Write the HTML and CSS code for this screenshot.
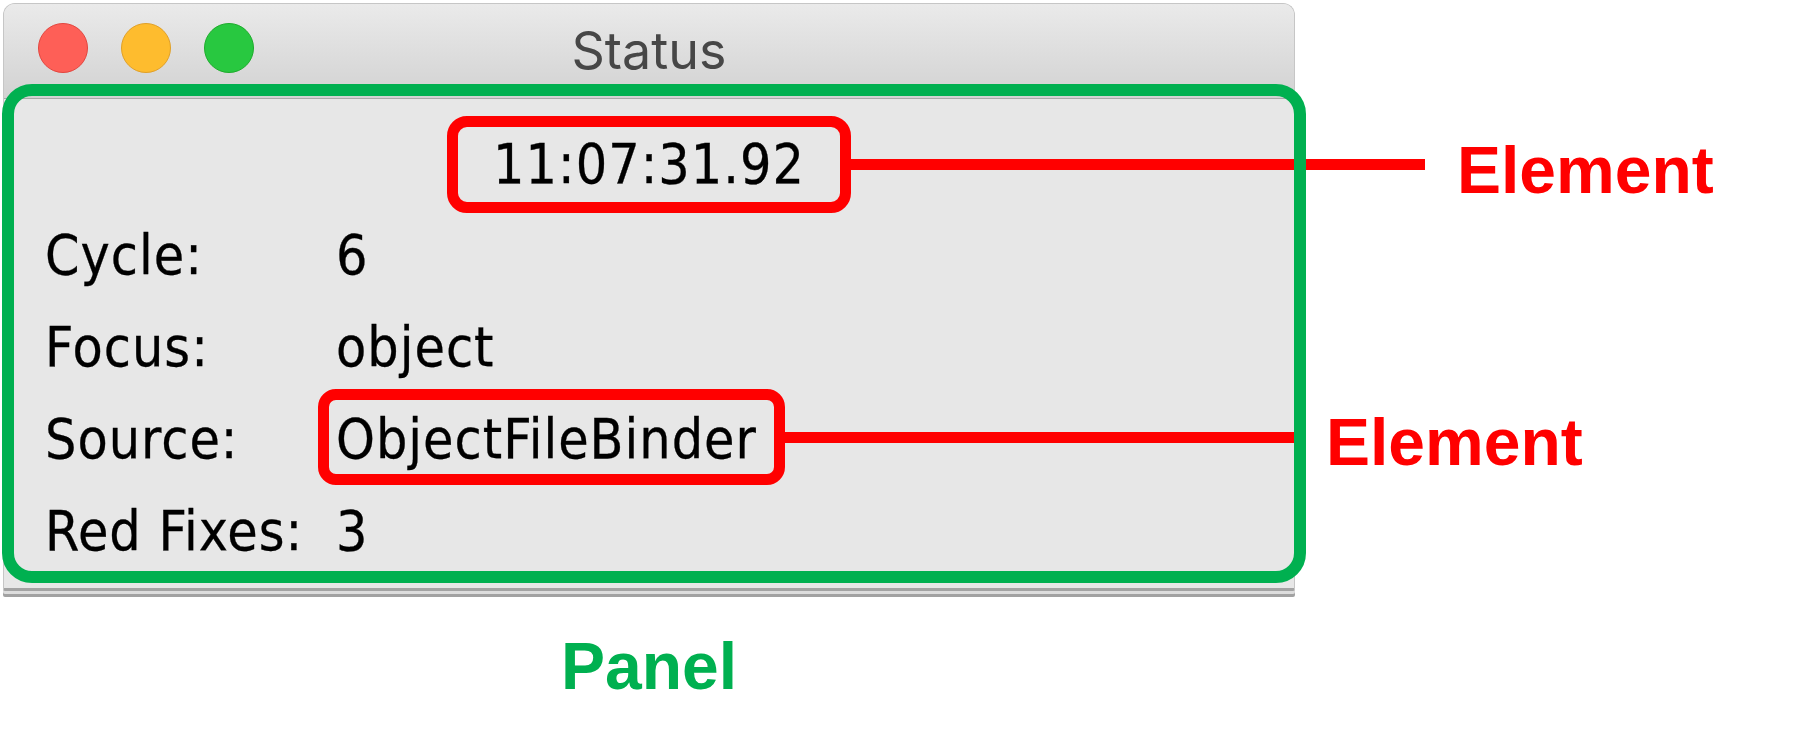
FILE: index.html
```html
<!DOCTYPE html>
<html lang="en">
<head>
<meta charset="utf-8">
<title>Status panel</title>
<link rel="stylesheet" href="styles.css">
</head>
<body>
<div class="stage">
  <div class="window">
    <div class="titlebar">
      <div class="lights">
        <span class="light light-close"></span>
        <span class="light light-min"></span>
        <span class="light light-max"></span>
      </div>
      <div class="title">Status</div>
      <div></div>
    </div>
    <div class="content">
      <div class="clock-row">
        <span class="clock mark">11:07:31.92
          <span class="callout callout-clock"><span class="callout-line"></span><span class="callout-tag">Element</span></span>
        </span>
      </div>
      <div class="fields">
        <div class="label">Cycle:</div><div class="value">6</div>
        <div class="label">Focus:</div><div class="value">object</div>
        <div class="label">Source:</div>
        <div class="value"><span class="source mark">ObjectFileBinder
          <span class="callout callout-source"><span class="callout-line"></span><span class="callout-tag">Element</span></span>
        </span></div>
        <div class="label">Red Fixes:</div><div class="value">3</div>
      </div>
    </div>
  </div>
  <div class="panel-outline"></div>
  <div class="caption">Panel</div>
</div>
</body>
</html>
```

FILE: styles.css
```css
html, body {
  margin: 0;
  padding: 0;
  background: #ffffff;
}

.stage {
  position: relative;
  width: 1799px;
  height: 743px;
  overflow: hidden;
}

.window {
  margin: 3px 0 0 3px;
  width: 1292px;
  box-sizing: border-box;
  border: 1px solid #c6c6c6;
  border-bottom: 3px solid #a3a3a3;
  border-radius: 12px 12px 2px 2px;
  background: #e7e7e7;
  box-shadow: 0 3px 0 #dddddd, 0 6px 0 #a2a2a2;
}

.titlebar {
  display: grid;
  grid-template-columns: 1fr auto 1fr;
  align-items: start;
  height: 95px;
  box-sizing: border-box;
  padding-top: 19px;
  background: linear-gradient(#eaeaea, #d2d2d2);
  border-bottom: 1px solid #a9a9a9;
  border-radius: 11px 11px 0 0;
}

.lights {
  display: flex;
  gap: 33px;
  margin-left: 34px;
}

.light {
  width: 50px;
  height: 50px;
  box-sizing: border-box;
  border-radius: 50%;
}

.light-close { background: #fe5f57; border: 1px solid #e2463f; }
.light-min { background: #febc2e; border: 1px solid #e0a028; }
.light-max { background: #28c840; border: 1px solid #1eac2c; }

.title {
  margin-top: 3px;
  font-family: "Inter", "Liberation Sans", sans-serif;
  font-size: 52px;
  line-height: 50px;
  color: #474747;
}

.content {
  padding: 0 0 11px 41px;
  font-family: "DejaVu Sans Condensed", "DejaVu Sans", sans-serif;
  font-stretch: condensed;
  font-size: 55px;
  letter-spacing: 1px;
  color: #000000;
  -webkit-text-stroke: 0.3px #000000;
}

.clock-row {
  display: flex;
  justify-content: center;
  padding: 17px 41px 0 0;
}

.mark {
  position: relative;
  display: inline-block;
  box-sizing: border-box;
  border: 11px solid #ff0000;
  border-radius: 20px;
}

.clock {
  width: 404px;
  height: 97px;
  line-height: 75px;
  text-align: center;
}

.fields {
  display: grid;
  grid-template-columns: 291px auto;
  margin-top: -4px;
  line-height: 92px;
}

.label, .value {
  white-space: nowrap;
}

.source {
  width: 467px;
  height: 96px;
  margin: -4px 0 0 -18px;
  padding: 4px 0 0 7px;
  line-height: 70px;
  border-radius: 18px;
}

.callout {
  position: absolute;
  left: 100%;
  top: 50%;
  display: flex;
  align-items: center;
  height: 0;
  margin-left: 11px;
  -webkit-text-stroke: 0;
}

.callout-line {
  display: block;
  height: 11px;
  background: #ff0000;
  flex: none;
}

.callout-clock .callout-line { width: 574px; }
.callout-source .callout-line { width: 509px; }

.callout-tag {
  margin: 10px 0 0 32px;
  font-family: "Liberation Sans", Arial, sans-serif;
  font-weight: bold;
  font-size: 66px;
  line-height: 66px;
  letter-spacing: 0;
  color: #ff0000;
}

.panel-outline {
  position: absolute;
  left: 2px;
  top: 84px;
  width: 1304px;
  height: 499px;
  box-sizing: border-box;
  border: 12px solid #00b050;
  border-radius: 30px;
}

.caption {
  width: 1292px;
  margin: 42px 0 0 3px;
  text-align: center;
  font-family: "Liberation Sans", Arial, sans-serif;
  font-weight: bold;
  font-size: 66px;
  line-height: 66px;
  color: #00b050;
}
```
